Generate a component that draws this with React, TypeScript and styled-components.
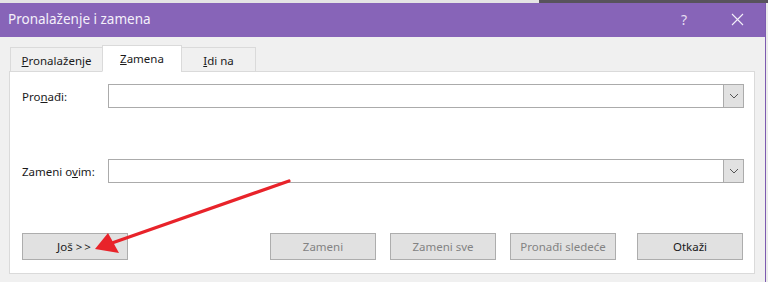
import React from "react";
import styled, { createGlobalStyle } from "styled-components";

const GlobalStyle = createGlobalStyle`
  html, body {
    margin: 0;
    padding: 0;
    background: #e8e8e8;
  }
  body {
    font-family: "Noto Sans", "Open Sans", sans-serif;
    font-size: 11.5px;
  }
`;

const tabs = [
  { label: "Pronalaženje", key: "P", rest: "ronalaženje", width: 93 },
  { label: "Zamena", key: "Z", rest: "amena", width: 80, active: true },
  { label: "Idi na", key: "I", rest: "di na", width: 75 },
];

const actions = [
  { label: "Zameni", disabled: true },
  { label: "Zameni sve", disabled: true },
  { label: "Pronađi sledeće", disabled: true },
  { label: "Otkaži" },
];

export default function App() {
  return (
    <Page>
      <GlobalStyle />
      <TopStrip>
        <StripLight />
        <StripDark />
      </TopStrip>
      <Window>
        <TitleBar>
          <Title>Pronalaženje i zamena</Title>
          <TitleButtons>
            <HelpGlyph>?</HelpGlyph>
            <CloseIcon width="13" height="13" viewBox="0 0 13 13">
              <path d="M1 1 L12 12 M12 1 L1 12" stroke="#f4f0fa" strokeWidth="1.1" />
            </CloseIcon>
          </TitleButtons>
        </TitleBar>

        <Body>
          <TabRow>
            {tabs.map((t) => (
              <Tab key={t.label} $active={!!t.active} $width={t.width}>
                <u>{t.key}</u>
                {t.rest}
              </Tab>
            ))}
          </TabRow>

          <Panel>
            <FieldRow>
              <Label>
                Pro<u>n</u>ađi:
              </Label>
              <Combo>
                <ComboInput />
                <ComboButton>
                  <Chevron />
                </ComboButton>
              </Combo>
            </FieldRow>

            <FieldRow $gap>
              <Label>
                Zameni o<u>v</u>im:
              </Label>
              <Combo>
                <ComboInput />
                <ComboButton>
                  <Chevron />
                </ComboButton>
              </Combo>
            </FieldRow>

            <ButtonRow>
              <Button>
                <u>J</u>oš <Wide>&gt;&gt;</Wide>
              </Button>
              <Actions>
                {actions.map((a) => (
                  <Button key={a.label} $disabled={a.disabled}>
                    {a.label}
                  </Button>
                ))}
              </Actions>
            </ButtonRow>
          </Panel>
        </Body>
      </Window>

      {/* red annotation arrow over the dialog */}
      <Arrow width="768" height="282" viewBox="0 0 768 282">
        <line x1="289" y1="181" x2="112" y2="243" stroke="#e8232a" strokeWidth="3.2" strokeLinecap="round" />
        <polygon points="95,249 108,233 119,253" fill="#e8232a" />
      </Arrow>
    </Page>
  );
}

function Chevron() {
  return (
    <svg width="10" height="6" viewBox="0 0 10 6">
      <path d="M1 1 L5 5 L9 1" fill="none" stroke="#555" strokeWidth="1" />
    </svg>
  );
}

const Page = styled.div`
  position: relative;
  width: 768px;
  height: 282px;
  overflow: hidden;
  background: #ececec;
`;

const TopStrip = styled.div`
  display: flex;
  height: 3px;
`;

const StripLight = styled.div`
  width: 539px;
  background: #e4e4e4;
`;

const StripDark = styled.div`
  flex: 1;
  background: #58535c;
`;

const Window = styled.div`
  width: 765px;
  height: 279px;
  border-right: 1px solid #7d5bb0;
  background: #f0f0f0;
  display: flex;
  flex-direction: column;
`;

const TitleBar = styled.div`
  height: 34px;
  background: #8764b8;
  display: flex;
  align-items: center;
  justify-content: space-between;
  padding: 0 0 0 8px;
`;

const Title = styled.div`
  color: #f4f0fa;
  font-size: 13.5px;
  margin-top: -2px;
`;

const TitleButtons = styled.div`
  display: flex;
  align-items: center;
  gap: 44px;
  padding-right: 21px;
`;

const HelpGlyph = styled.span`
  color: #e6def2;
  font-size: 14px;
  margin-top: -2px;
`;

const CloseIcon = styled.svg`
  display: block;
  margin-top: -1px;
`;

const Body = styled.div`
  flex: 1;
  padding: 9px 10px 8px 9px;
  display: flex;
  flex-direction: column;
`;

const TabRow = styled.div`
  display: flex;
  align-items: flex-end;
  padding-left: 1px;
  height: 26px;
  margin-bottom: -1px;
  position: relative;
  z-index: 1;
`;

const Tab = styled.div<{ $active: boolean; $width: number }>`
  width: ${(p) => p.$width}px;
  box-sizing: border-box;
  height: ${(p) => (p.$active ? 27 : 25)}px;
  background: ${(p) => (p.$active ? "#ffffff" : "#f0f0f0")};
  border: 1px solid #dadada;
  border-bottom: ${(p) => (p.$active ? "1px solid #ffffff" : "1px solid #dadada")};
  color: #1a1a1a;
  display: flex;
  align-items: center;
  justify-content: center;
  padding-top: ${(p) => (p.$active ? 0 : 2)}px;

  & + & {
    margin-left: -1px;
  }
`;

const Panel = styled.div`
  flex: 1;
  background: #ffffff;
  border: 1px solid #dadada;
  padding: 12px 10px 13px 12px;
  display: flex;
  flex-direction: column;
`;

const FieldRow = styled.div<{ $gap?: boolean }>`
  display: flex;
  align-items: center;
  margin-top: ${(p) => (p.$gap ? 51 : 0)}px;
`;

const Label = styled.div`
  width: 86px;
  color: #1a1a1a;
`;

const Combo = styled.div`
  flex: 1;
  height: 24px;
  box-sizing: border-box;
  border: 1px solid #ababab;
  display: flex;
  background: #ffffff;
`;

const ComboInput = styled.div`
  flex: 1;
`;

const ComboButton = styled.div`
  width: 19px;
  background: #e1e1e1;
  border-left: 1px solid #ababab;
  display: flex;
  align-items: center;
  justify-content: center;
`;

const ButtonRow = styled.div`
  margin-top: auto;
  display: flex;
  justify-content: space-between;
  align-items: center;
  padding-right: 1px;
`;

const Actions = styled.div`
  display: flex;
  gap: 14px;

  & > :last-child {
    margin-left: 7px;
  }
`;

const Button = styled.div<{ $disabled?: boolean }>`
  width: 106px;
  height: 27px;
  box-sizing: border-box;
  border: 1px solid #adadad;
  background: #e1e1e1;
  color: ${(p) => (p.$disabled ? "#838383" : "#1a1a1a")};
  display: flex;
  align-items: center;
  justify-content: center;
  white-space: pre;
`;

const Wide = styled.span`
  letter-spacing: 2px;
`;

const Arrow = styled.svg`
  position: absolute;
  left: 0;
  top: 0;
  pointer-events: none;
`;
